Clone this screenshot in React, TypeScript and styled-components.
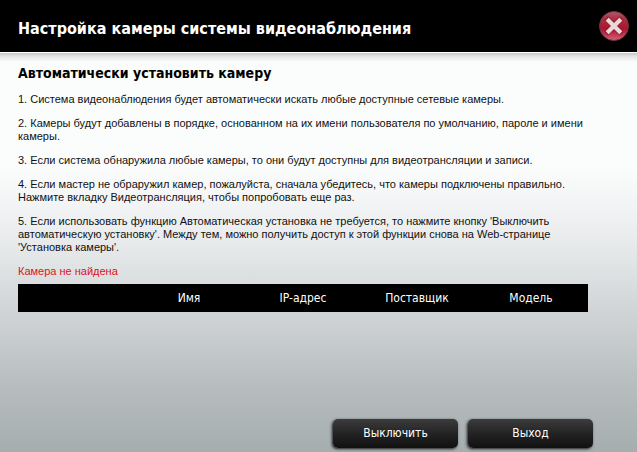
import React from "react";
import styled, { createGlobalStyle } from "styled-components";

const GlobalStyle = createGlobalStyle`
  *, *::before, *::after { box-sizing: border-box; }
  body {
    margin: 0;
    font-family: Tahoma, "DejaVu Sans Condensed", "Noto Sans", sans-serif;
    color: #111;
  }
`;

const Page = styled.div`
  display: flex;
  flex-direction: column;
  min-height: 100vh;
  background: linear-gradient(
    to bottom,
    #fbfdfc 0%,
    #fbfdfc 37%,
    #f2f3f4 46%,
    #e3e6e7 57%,
    #d1d4d6 69%,
    #b9bfc1 84%,
    #a5adaf 100%
  );
`;

const Header = styled.header`
  display: flex;
  align-items: center;
  justify-content: space-between;
  height: 52px;
  padding: 0 7px 0 18px;
  background: #000;
`;

const Title = styled.h1`
  margin: 0;
  padding-top: 6px;
  font-size: 16px;
  line-height: 24px;
  color: #fff;
`;

const CloseButton = styled.button`
  display: flex;
  padding: 0;
  border: 0;
  background: none;
  cursor: pointer;
`;

const HeaderEdge = styled.div`
  height: 10px;
  border-top: 1px solid #fff;
  background: linear-gradient(to bottom, #c6c8c7, #e4e6e5 40%, #fbfdfc);
`;

const Content = styled.main`
  flex: 1;
  display: flex;
  flex-direction: column;
  padding: 2px 49px 16px 18px;
`;

const Heading = styled.h2`
  margin: 0;
  font-size: 14px;
  line-height: 18px;
  color: #000;
`;

const Steps = styled.div`
  display: flex;
  flex-direction: column;
  gap: 11px;
  margin-top: 11px;
  font-family: "Liberation Sans", Arial, sans-serif;
  font-size: 11px;
  line-height: 13px;
`;

const Step = styled.p`
  margin: 0;
`;

const Status = styled(Step)`
  color: #e0101c;
`;

const CameraTable = styled.table`
  width: 100%;
  margin-top: 6px;
  table-layout: fixed;
  border-collapse: collapse;
  background: #000;
`;

const ColumnHead = styled.th`
  height: 28px;
  padding: 0;
  font-size: 12px;
  font-weight: 400;
  line-height: 16px;
  text-align: center;
  color: #fff;
`;

const Actions = styled.footer`
  display: flex;
  justify-content: flex-end;
  gap: 10px;
  padding: 0 44px 4px 18px;
`;

const ActionButton = styled.button`
  width: 125px;
  height: 29px;
  padding: 0 0 2px;
  border: 0;
  border-radius: 5px;
  background: linear-gradient(to bottom, #3c3c3c, #232323 50%, #111);
  box-shadow: -1px 1px 3px rgba(0, 0, 0, 0.85);
  font-family: inherit;
  font-size: 12px;
  line-height: 16px;
  color: #fff;
  cursor: pointer;
`;

function CloseIcon() {
  return (
    <svg width="32" height="32" viewBox="0 0 32 32" aria-hidden="true">
      <defs>
        <linearGradient id="disc" x1="0" y1="0" x2="0" y2="1">
          <stop offset="0" stopColor="#b25a67" />
          <stop offset="0.25" stopColor="#ad2f43" />
          <stop offset="0.6" stopColor="#a9152f" />
          <stop offset="1" stopColor="#d9607a" />
        </linearGradient>
      </defs>
      <circle cx="16" cy="16" r="14.5" fill="url(#disc)" stroke="#6b3640" />
      <path
        d="M10 10L22 22M22 10L10 22"
        stroke="#7c1526"
        strokeWidth="6"
        strokeLinecap="square"
        opacity="0.4"
      />
      <path d="M9.2 9.2L22.8 22.8M22.8 9.2L9.2 22.8" stroke="#ead9d9" strokeWidth="4.2" />
    </svg>
  );
}

const columns = ["", "Имя", "IP-адрес", "Поставщик", "Модель"];

export default function App() {
  return (
    <>
      <GlobalStyle />
      <Page>
        <Header>
          <Title>Настройка камеры системы видеонаблюдения</Title>
          <CloseButton type="button" aria-label="Закрыть">
            <CloseIcon />
          </CloseButton>
        </Header>
        <HeaderEdge />
        <Content>
          <Heading>Автоматически установить камеру</Heading>
          <Steps>
            <Step>1. Система видеонаблюдения будет автоматически искать любые доступные сетевые камеры.</Step>
            <Step>
              2. Камеры будут добавлены в порядке, основанном на их имени пользователя по умолчанию, пароле и имени
              камеры.
            </Step>
            <Step>3. Если система обнаружила любые камеры, то они будут доступны для видеотрансляции и записи.</Step>
            <Step>
              4. Если мастер не обраружил камер, пожалуйста, сначала убедитесь, что камеры подключены правильно.
              <br />
              Нажмите вкладку Видеотрансляция, чтобы попробовать еще раз.
            </Step>
            <Step>
              5. Если использовать функцию Автоматическая установка не требуется, то нажмите кнопку 'Выключить
              <br />
              автоматическую установку'. Между тем, можно получить доступ к этой функции снова на Web-странице
              <br />
              'Установка камеры'.
            </Step>
            <Status role="status">Камера не найдена</Status>
          </Steps>
          <CameraTable>
            <thead>
              <tr>
                {columns.map((name) => (
                  <ColumnHead key={name} scope="col">
                    {name}
                  </ColumnHead>
                ))}
              </tr>
            </thead>
          </CameraTable>
        </Content>
        <Actions>
          <ActionButton type="button">Выключить</ActionButton>
          <ActionButton type="button">Выход</ActionButton>
        </Actions>
      </Page>
    </>
  );
}
